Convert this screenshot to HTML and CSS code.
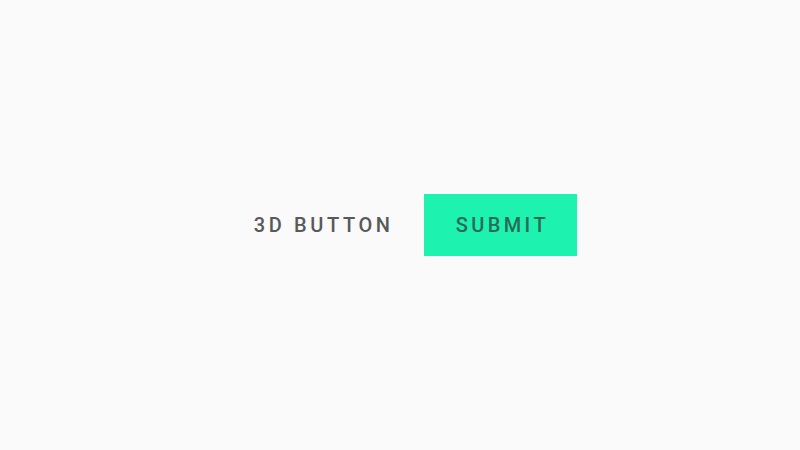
FILE: index.html
```html
<!DOCTYPE html>
<html>
<head>
<meta charset="utf-8">
<link rel="stylesheet" href="styles.css">
</head>
<body>
<div class="stage">
  <span class="label">3D BUTTON</span>
  <button class="submit">SUBMIT</button>
</div>
</body>
</html>
```
FILE: styles.css
```css
html, body {
  margin: 0;
  padding: 0;
  background: #fafafa;
}
.stage {
  width: 800px;
  height: 450px;
  display: flex;
  align-items: center;
  justify-content: center;
  padding-left: 31px;
  box-sizing: border-box;
  gap: 30.6px;
  font-family: Roboto, "Liberation Sans", sans-serif;
}
.label {
  font-size: 20px;
  font-weight: 500;
  letter-spacing: 3.6px;
  color: #595959;
}
.submit {
  width: 153px;
  height: 62px;
  border: none;
  background: #1df2ae;
  color: #2b6a56;
  font-family: Roboto, "Liberation Sans", sans-serif;
  font-size: 20px;
  font-weight: 500;
  letter-spacing: 3.4px;
  padding: 0 0 0 3.4px;
}
```
